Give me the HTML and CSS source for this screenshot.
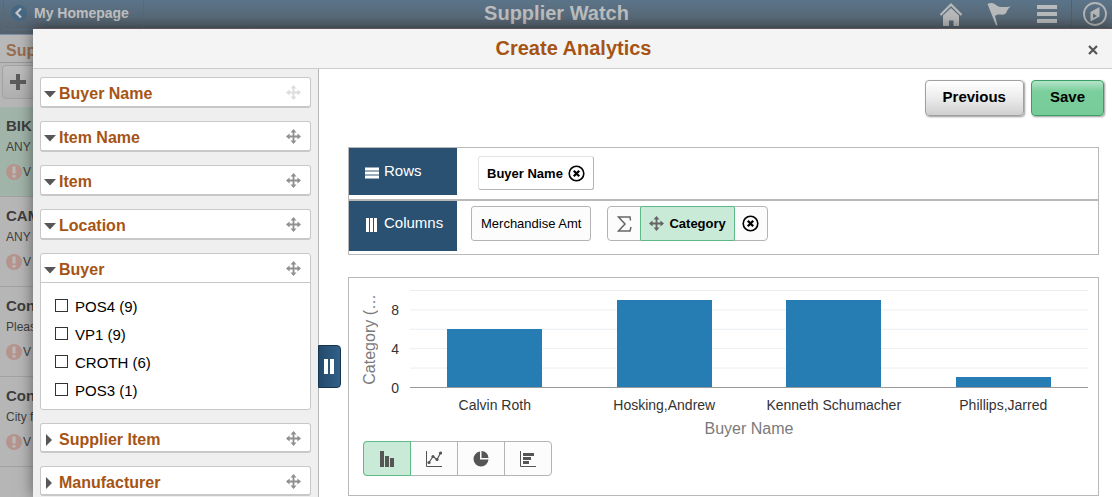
FILE: index.html
```html
<!DOCTYPE html>
<html lang="en">
<head>
<meta charset="utf-8">
<title>Supplier Watch</title>
<link rel="stylesheet" href="styles.css">
</head>
<body>
<svg class="defs" width="0" height="0" aria-hidden="true">
  <symbol id="move" viewBox="0 0 15 15">
    <path d="M7.500 1.500V13.500M1.500 7.500H13.500" stroke="currentColor" stroke-width="1.800" fill="none"/>
    <path d="M7.500 0L10.500 3.600H4.500zM7.500 15L4.500 11.400H10.500zM0 7.500L3.600 4.500V10.500zM15 7.500L11.400 10.500V4.500z" fill="currentColor"/>
  </symbol>
  <symbol id="remove" viewBox="0 0 17 17">
    <circle cx="8.500" cy="8.500" r="7.300" fill="none" stroke="currentColor" stroke-width="1.600"/>
    <path d="M5.800 5.800L11.200 11.200M11.200 5.800L5.800 11.200" stroke="currentColor" stroke-width="2.300"/>
  </symbol>
  <symbol id="alert" viewBox="0 0 16 16">
    <circle cx="8" cy="8" r="8" fill="#b5948e"/>
    <path d="M6.500 2.500H9.500V9.500H6.500zM6.500 11H9.500V13.500H6.500z" fill="#bcbab8"/>
  </symbol>
</svg>

<header class="topbar">
  <button class="back" type="button">
    <svg width="16" height="16" viewBox="0 0 16 16"><circle cx="8" cy="8" r="8" fill="#456782"/><path d="M10 3.500L5.500 8L10 12.500" fill="none" stroke="#c4c6c8" stroke-width="2.200"/></svg>
    My Homepage
  </button>
  <h1 class="page-title">Supplier Watch</h1>
  <nav class="tools">
    <button type="button" aria-label="Home"><svg width="24" height="24" viewBox="0 0 24 24"><path d="M1.500 13L12 2.500L22.500 13" fill="none" stroke="#b9babb" stroke-width="2.200"/><path d="M4 13.500L12 6L20 13.500V24H14.500V18.500H10V24H4z" fill="#b9babb"/></svg></button>
    <button type="button" aria-label="Notifications"><svg width="24" height="24" viewBox="0 0 24 24"><path d="M0.500 2C3 .5 6 .5 9 3C12 5.500 17 5.500 24 4.500C20 6.500 20.500 10 18 12C15 14 12 11 8 14L10.500 23L9 23.500z" fill="#b9babb"/></svg></button>
    <button type="button" aria-label="Actions"><svg width="20" height="18" viewBox="0 0 20 18"><path d="M0 0H20V4H0zM0 7H20V11H0zM0 14H20V18H0z" fill="#b9babb"/></svg></button>
    <button class="nav-btn" type="button" aria-label="Navigator"><svg width="24" height="24" viewBox="0 0 24 24"><circle cx="12" cy="12" r="11" fill="none" stroke="#b4b6b8" stroke-width="1.800"/><path fill-rule="evenodd" d="M7.500 10L16.500 5V14.500L7.500 19.500zM10 11.500V16L14 14z" fill="#b4b6b8"/></svg></button>
  </nav>
</header>

<aside class="list">
  <h2 class="list-title">Sup</h2>
  <div class="list-tools"><button class="add" type="button" aria-label="Add"><svg width="16" height="16" viewBox="0 0 16 16"><path d="M8 0V16M0 8H16" stroke="#5c5c5c" stroke-width="4"/></svg></button></div>
  <article class="item selected"><h3>BIK</h3><p>ANY</p><div class="flag"><svg width="16" height="16"><use href="#alert"/></svg>V</div></article>
  <article class="item"><h3>CAM</h3><p>ANY</p><div class="flag"><svg width="16" height="16"><use href="#alert"/></svg>V</div></article>
  <article class="item"><h3>Con</h3><p>Pleas</p><div class="flag"><svg width="16" height="16"><use href="#alert"/></svg>V</div></article>
  <article class="item"><h3>Con</h3><p>City f</p><div class="flag"><svg width="16" height="16"><use href="#alert"/></svg>V</div></article>
</aside>

<section class="dialog" role="dialog" aria-labelledby="dialog-title">
  <header class="dialog-head">
    <h2 id="dialog-title">Create Analytics</h2>
    <button class="close" type="button" aria-label="Close"><svg width="10" height="10" viewBox="0 0 10 10"><path d="M1 1L9 9M9 1L1 9" stroke="#555" stroke-width="2.200"/></svg></button>
  </header>
  <div class="dialog-body">
    <div class="facets">
      <section class="facet"><div class="facet-head"><button class="fold" type="button"><svg width="12" height="12" viewBox="0 0 12 12"><path d="M0 3H12L6 9.500z" fill="#575757"/></svg>Buyer Name</button><button class="drag off" type="button" aria-label="Move Buyer Name"><svg width="15" height="15"><use href="#move"/></svg></button></div></section>
      <section class="facet"><div class="facet-head"><button class="fold" type="button"><svg width="12" height="12" viewBox="0 0 12 12"><path d="M0 3H12L6 9.500z" fill="#575757"/></svg>Item Name</button><button class="drag" type="button" aria-label="Move Item Name"><svg width="15" height="15"><use href="#move"/></svg></button></div></section>
      <section class="facet"><div class="facet-head"><button class="fold" type="button"><svg width="12" height="12" viewBox="0 0 12 12"><path d="M0 3H12L6 9.500z" fill="#575757"/></svg>Item</button><button class="drag" type="button" aria-label="Move Item"><svg width="15" height="15"><use href="#move"/></svg></button></div></section>
      <section class="facet"><div class="facet-head"><button class="fold" type="button"><svg width="12" height="12" viewBox="0 0 12 12"><path d="M0 3H12L6 9.500z" fill="#575757"/></svg>Location</button><button class="drag" type="button" aria-label="Move Location"><svg width="15" height="15"><use href="#move"/></svg></button></div></section>
      <section class="facet open">
        <div class="facet-head"><button class="fold" type="button"><svg width="12" height="12" viewBox="0 0 12 12"><path d="M0 3H12L6 9.500z" fill="#575757"/></svg>Buyer</button><button class="drag" type="button" aria-label="Move Buyer"><svg width="15" height="15"><use href="#move"/></svg></button></div>
        <div class="options">
          <label><input type="checkbox">POS4 (9)</label>
          <label><input type="checkbox">VP1 (9)</label>
          <label><input type="checkbox">CROTH (6)</label>
          <label><input type="checkbox">POS3 (1)</label>
        </div>
      </section>
      <section class="facet closed"><div class="facet-head"><button class="fold" type="button"><svg width="12" height="12" viewBox="0 0 12 12"><path d="M2 0L8 6L2 12z" fill="#575757"/></svg>Supplier Item</button><button class="drag" type="button" aria-label="Move Supplier Item"><svg width="15" height="15"><use href="#move"/></svg></button></div></section>
      <section class="facet closed"><div class="facet-head"><button class="fold" type="button"><svg width="12" height="12" viewBox="0 0 12 12"><path d="M2 0L8 6L2 12z" fill="#575757"/></svg>Manufacturer</button><button class="drag" type="button" aria-label="Move Manufacturer"><svg width="15" height="15"><use href="#move"/></svg></button></div></section>
    </div>

    <main class="work">
      <button class="handle" type="button" aria-label="Toggle facets"><svg width="10" height="15" viewBox="0 0 10 15"><path d="M0 0H4V15H0zM6 0H10V15H6z" fill="#fff"/></svg></button>
      <div class="actions">
        <button class="btn" type="button">Previous</button>
        <button class="btn save" type="button">Save</button>
      </div>

      <div class="axes">
        <div class="axis rows">
          <div class="axis-name"><svg width="14" height="12" viewBox="0 0 14 12"><path d="M0 0H14V12H0z" fill="#98abba"/><path d="M0 1H14V3H0zM0 5H14V7H0zM0 9H14V11H0z" fill="#fff"/></svg>Rows</div>
          <div class="chips first">
            <div class="chip bold">Buyer Name<button class="icon" type="button" aria-label="Remove Buyer Name"><svg width="17" height="17"><use href="#remove"/></svg></button></div>
          </div>
        </div>
        <div class="axis cols">
          <div class="axis-name"><svg width="14" height="14" viewBox="0 0 14 14"><path d="M1 0H4V14H1zM5 0H8V14H5zM9 0H12V14H9z" fill="#fff"/></svg>Columns</div>
          <div class="chips">
            <div class="chip wide">Merchandise Amt</div>
            <div class="group">
              <button class="sum" type="button" aria-label="Aggregate"><svg width="15" height="16" viewBox="0 0 15 16"><path d="M13.500 4.500L13 1H1.500L8 8L1.500 15H13L14 11" fill="none" stroke="#666" stroke-width="1.500"/></svg></button>
              <button class="measure" type="button"><svg width="15" height="15"><use href="#move"/></svg>Category</button>
              <button class="sum" type="button" aria-label="Remove Category"><svg width="17" height="17"><use href="#remove"/></svg></button>
            </div>
          </div>
        </div>
      </div>

      <div class="chart-card">
        <div class="chart">
          <div class="y-title"><span>Category (…</span></div>
          <div class="ticks"><span>8</span><span>4</span><span>0</span></div>
          <div class="plot">
            <div class="band"><div class="bar" style="height:60%"></div></div>
            <div class="band"><div class="bar" style="height:90%"></div></div>
            <div class="band"><div class="bar" style="height:90%"></div></div>
            <div class="band"><div class="bar" style="height:10%"></div></div>
          </div>
          <div class="x-labels"><span>Calvin Roth</span><span>Hosking,Andrew</span><span>Kenneth Schumacher</span><span>Phillips,Jarred</span></div>
          <div class="x-title">Buyer Name</div>
        </div>
        <div class="types">
          <button class="on" type="button" aria-label="Bar chart"><svg width="14" height="16" viewBox="0 0 14 16"><path d="M0 0H4V16H0zM5 5H9V16H5zM10 7H14V16H10z" fill="#555"/></svg></button>
          <button type="button" aria-label="Line chart"><svg width="16" height="16" viewBox="0 0 16 16"><path d="M.5 0V15.500H16" fill="none" stroke="#555"/><path d="M3 11.500L7 5.500L11 8.500L14.500 2" fill="none" stroke="#555" stroke-width="1.200"/><circle cx="3" cy="11.500" r="1.600" fill="#555"/><circle cx="7" cy="5.500" r="1.600" fill="#555"/><circle cx="11" cy="8.500" r="1.600" fill="#555"/><circle cx="14.500" cy="2" r="1.600" fill="#555"/></svg></button>
          <button type="button" aria-label="Pie chart"><svg width="16" height="16" viewBox="0 0 16 16"><path d="M7 .5V8.500H15.500A7.500 7.500 0 1 1 7 .5z" fill="#555"/><path d="M8.500 0A7 7 0 0 1 15.500 7H8.500z" fill="#555"/></svg></button>
          <button type="button" aria-label="Horizontal bar chart"><svg width="16" height="16" viewBox="0 0 16 16"><path d="M.5 0V15.500H16" fill="none" stroke="#555"/><path d="M3 2H14V5H3zM3 6H11V9H3zM3 10H9V13H3z" fill="#555"/></svg></button>
        </div>
      </div>
    </main>
  </div>
</section>
</body>
</html>
```
FILE: styles.css
```css
* { box-sizing: border-box; }
body {
  margin: 0;
  height: 100vh;
  overflow: hidden;
  background: #b6b6b6;
  font-family: "Liberation Sans", Arial, sans-serif;
  color: #000;
}
h1, h2, h3, p { margin: 0; }
button { margin: 0; padding: 0; border: 0; background: none; font: inherit; color: inherit; }
svg { display: block; flex: none; }
.defs { position: absolute; }

.topbar {
  display: grid;
  grid-template-columns: 1fr auto 1fr;
  align-items: start;
  height: 35px;
  background: linear-gradient(#5b7489, #56636e 28px, #56636e);
  border-bottom: 1px solid #7b8ea8;
}
.back {
  justify-self: start;
  display: flex;
  align-items: center;
  gap: 7px;
  height: 30px;
  margin-left: 3px;
  padding: 0 14px 3px 7px;
  border: 1px solid #526b80;
  border-top: 0;
  font-size: 14px;
  font-weight: bold;
  color: #c0c1c2;
}
.page-title { padding-left: 1px; font-size: 20px; line-height: 26px; color: #bcbdbe; }
.tools { justify-self: end; display: flex; height: 28px; }
.tools button { display: flex; align-items: center; justify-content: center; width: 48px; }
.tools .nav-btn { width: 41px; padding-left: 5px; border-left: 1px solid #4b6174; }

.list { width: 33px; color: #3e3e3e; }
.list-title {
  height: 28px;
  padding: 0 6px;
  border-bottom: 1px solid #999;
  font-size: 16px;
  line-height: 31px;
  color: #986e50;
  background: #b8b8b8;
}
.list-tools { height: 44px; padding: 2px; }
.add {
  display: flex;
  align-items: center;
  width: 60px;
  height: 34px;
  padding-left: 7px;
  border: 1px solid #a2a2a2;
  border-radius: 4px;
  background: linear-gradient(#bebebe, #b0b0b0);
}
.item {
  height: 90px;
  padding: 9px 0 0 6px;
  border-bottom: 1px solid #a2a2a2;
  white-space: nowrap;
}
.selected { background: #a1b4a9; }
.item h3 { font-size: 15px; line-height: 20px; }
.item p { padding-top: 2px; font-size: 12px; line-height: 18px; }
.flag { display: flex; align-items: center; gap: 1px; padding-top: 7px; font-size: 12px; line-height: 18px; }

.dialog {
  position: absolute;
  inset: 28px 0 0 33px;
  display: flex;
  flex-direction: column;
  border-top: 1px solid #5d5358;
  background: #fff;
  box-shadow: 0 0 14px rgba(0, 0, 0, .5);
}
.dialog-head {
  display: grid;
  grid-template-columns: 1fr auto 1fr;
  align-items: center;
  height: 40px;
  flex: none;
  padding-left: 2px;
  border-bottom: 1px solid #ccc;
  background: #f4f4f4;
}
.dialog-head h2 { grid-column: 2; padding-bottom: 2px; font-size: 20px; line-height: 36px; color: #a65414; }
.close { justify-self: end; padding: 2px 14px 0 4px; }
.dialog-body { flex: 1; display: flex; min-height: 0; }

.facets {
  flex: none;
  display: flex;
  flex-direction: column;
  gap: 13px;
  width: 286px;
  padding: 8px 7px 0;
  overflow: hidden;
  border-right: 1px solid #b8b8b8;
  background: #efefef;
}
.facet {
  flex: none;
  border: 1px solid #c8c8c8;
  border-bottom-width: 2px;
  border-radius: 3px;
  background: #fff;
}
.facet-head { display: flex; justify-content: space-between; height: 28px; padding: 0 9px 0 3px; }
.closed .facet-head { height: 27px; }
.fold {
  display: flex;
  align-items: center;
  gap: 3px;
  padding-top: 3px;
  font-size: 16px;
  font-weight: bold;
  color: #a65414;
}
.closed .fold { padding-top: 4px; }
.drag { color: #909090; }
.drag.off { color: #ddd; }
.closed .drag { padding-top: 2px; }
.open { border-bottom-width: 1px; }
.open .facet-head { height: 29px; border-bottom: 1px solid #c8c8c8; }
.options { padding: 9px 14px 5px; }
.options label { display: flex; align-items: center; gap: 7px; height: 28px; font-size: 15px; }
.options input {
  appearance: none;
  width: 13px;
  height: 13px;
  margin: 0 0 2px;
  border: 1px solid #333;
  background: #fff;
}

.work { position: relative; flex: 1; min-width: 0; padding: 11px 8px 0 29px; }
.handle {
  position: absolute;
  left: -1px;
  top: 276px;
  display: flex;
  align-items: center;
  justify-content: center;
  width: 23px;
  height: 43px;
  padding-right: 2px;
  border: 1px solid #16364f;
  border-radius: 0 4px 4px 0;
  background: linear-gradient(90deg, #234a6c, #326088);
}
.actions { display: flex; justify-content: flex-end; gap: 7px; }
.btn {
  height: 36px;
  padding: 0 17px 3px;
  border: 1px solid #a0a0a0;
  border-radius: 4px;
  background: linear-gradient(#fff, #ececec 50%, #cfcfcf);
  box-shadow: 1px 1px 2px rgba(0, 0, 0, .4);
  font-size: 15px;
  font-weight: bold;
}
.save { padding: 0 18px 3px; border-color: #38a065; background: linear-gradient(#b5e4c8, #7bcf9d 30%, #76cb98); }

.axes { margin: 31px 5px 0 0; border: 1px solid #b8b8b8; }
.axis { display: flex; align-items: flex-start; }
.rows { height: 53px; border-bottom: 2px solid #b8b8b8; }
.cols { height: 53px; }
.axis-name {
  flex: none;
  display: flex;
  align-items: center;
  gap: 5px;
  width: 108px;
  height: 47px;
  padding: 0 0 2px 16px;
  background: #2a5172;
  color: #fff;
  font-size: 15px;
}
.axis-name svg { margin-top: 4px; }
.cols .axis-name { height: 50px; padding-bottom: 7px; }
.chips { display: flex; gap: 16px; padding: 5px 0 0 14px; font-size: 13px; }
.chips.first { padding: 8px 0 0 21px; }
.chip {
  display: flex;
  align-items: center;
  gap: 5px;
  height: 35px;
  padding: 0 8px;
  border: 1px solid #b4b4b4;
  border-radius: 3px;
  background: #fcfcfc;
}
.chip.wide { padding: 0 9px; }
.chip.bold { height: 34px; border-color: #e4e4e4 #b4b4b4 #b4b4b4 #e4e4e4; background: #fff; font-weight: bold; }
.group { display: flex; height: 35px; border: 1px solid #b4b4b4; border-radius: 4px; background: #fcfcfc; }
.sum { display: flex; align-items: center; justify-content: center; width: 32px; }
.measure {
  display: flex;
  align-items: center;
  gap: 5px;
  margin: -1px 0;
  padding: 0 8px;
  border: 1px solid #5dba87;
  border-radius: 2px;
  background: #c9ead7;
  font-weight: bold;
}
.measure svg { color: #666; }

.chart-card { margin: 22px 5px 0 0; padding: 12px 10px 19px 14px; border: 1px solid #b8b8b8; }
.chart { display: grid; grid-template-columns: 14px 21px 1fr; grid-template-rows: 98px auto auto; column-gap: 6px; }
.y-title { display: flex; align-items: center; justify-content: center; color: #7a7a7a; font-size: 16px; }
.y-title span { writing-mode: vertical-rl; transform: rotate(180deg); white-space: nowrap; }
.ticks {
  display: flex;
  flex-direction: column;
  gap: 21px;
  padding: 11px 5px 0 0;
  text-align: right;
  color: #333;
  font-size: 14px;
  line-height: 18px;
}
.plot {
  display: grid;
  grid-template-columns: repeat(4, 1fr);
  border-bottom: 1px solid #999;
  background: linear-gradient(#e9eef0 1px, transparent 1px) 0 0 / 100% 20%;
}
.band { display: flex; align-items: flex-end; justify-content: center; }
.bar { width: 56%; background: #267db3; }
.x-labels {
  grid-column: 3;
  display: grid;
  grid-template-columns: repeat(4, 1fr);
  padding-top: 7px;
  text-align: center;
  white-space: nowrap;
  color: #333;
  font-size: 14px;
  line-height: 20px;
}
.x-title { grid-column: 3; padding-top: 3px; text-align: center; color: #7a7a7a; font-size: 16px; line-height: 22px; }
.types { display: inline-flex; margin-top: 1px; border: 1px solid #b4b4b4; border-radius: 4px; background: #fcfcfc; }
.types button { display: flex; align-items: center; justify-content: center; width: 47px; height: 33px; border-right: 1px solid #b4b4b4; }
.types button:last-child { width: 46px; border-right: 0; }
.types .on { height: 35px; margin: -1px 0 -1px -1px; width: 48px; border: 1px solid #5dba87; border-radius: 4px 0 0 4px; background: #c9ead7; }
```
